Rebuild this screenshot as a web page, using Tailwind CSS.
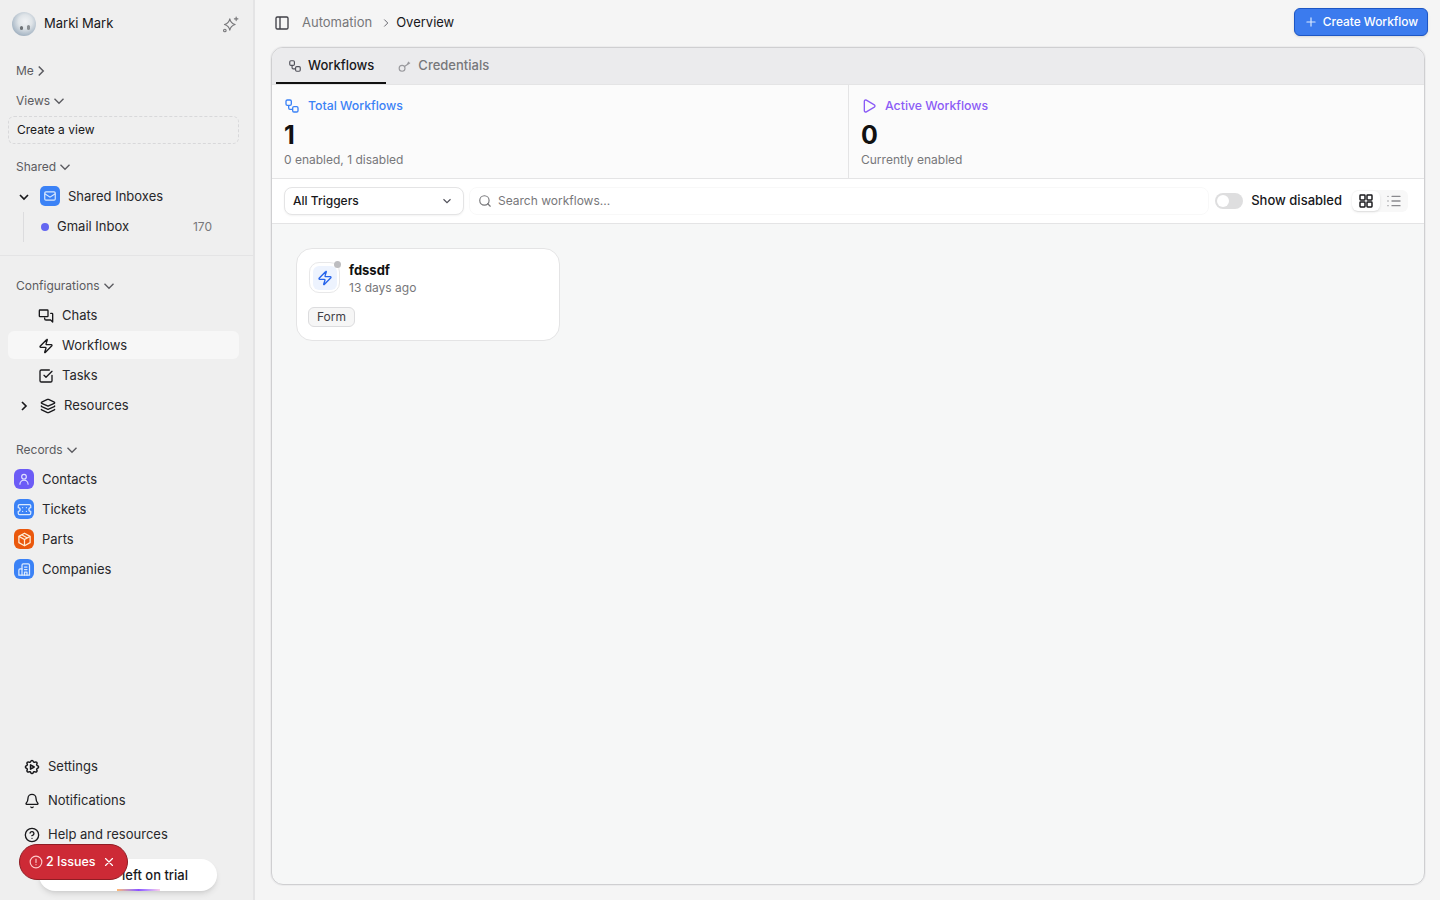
<!DOCTYPE html>
<html lang="en">
  <head>
    <meta charset="UTF-8" />
    <title>Automation - Overview</title>
    <script src="https://cdn.jsdelivr.net/npm/@tailwindcss/browser@4"></script>
  </head>
  <body class="h-screen overflow-hidden bg-[#f5f5f5] font-[Inter,sans-serif] text-[13px] text-[#18181b] antialiased">
    <div class="flex h-[900px]">
      <!-- sidebar -->
      <aside class="relative flex h-full w-[255px] shrink-0 flex-col border-r-2 border-[#e4e4e5] bg-[#efefef] pl-2 pr-[14px]">
        <div class="flex h-[48px] shrink-0 items-center pl-1">
          <div class="relative h-6 w-6 overflow-hidden rounded-full bg-[radial-gradient(circle_at_55%_40%,#f1f3f5_0%,#dfe4e8_35%,#a9b8c6_70%,#76818c_100%)]">
            <span class="absolute left-[8px] top-[14px] h-[4px] w-[3px] rounded-full bg-[#6d7276]"></span>
            <span class="absolute left-[15px] top-[13px] h-[5px] w-[3px] rounded-full bg-[#8a8f93]"></span>
          </div>
          <span class="ml-2 text-[13px]">Marki Mark</span>
          <svg class="ml-auto h-[17px] w-[17px] text-[#77777a]" viewBox="0 0 24 24" fill="none" stroke="currentColor" stroke-width="1.600" stroke-linecap="round" stroke-linejoin="round"><path d="M11 4c.8 4.500 2.500 6.500 7.500 8-5 1.500-6.700 3.500-7.500 8-.8-4.500-2.500-6.500-7.500-8 5-1.500 6.700-3.500 7.500-8z" /><path d="M20 1.500v5M17.500 4h5" /><circle cx="4" cy="20.500" r="1.800" /></svg>
        </div>
        <div class="mt-2 flex h-[30px] items-center pl-2 text-xs text-[#5b5b60]">Me<svg class="-ml-[2px] h-[18px] w-[18px]" viewBox="0 0 24 24" fill="none" stroke="currentColor" stroke-width="2"><path d="m9 6 6 6-6 6" /></svg></div>
        <div class="flex h-[30px] items-center pl-2 text-xs text-[#5b5b60]">Views<svg class="h-[18px] w-[18px]" viewBox="0 0 24 24" fill="none" stroke="currentColor" stroke-width="1.800"><path d="m6 9 6 6 6-6" /></svg></div>
        <div class="flex h-[28px] items-center rounded-md border border-dashed border-[#d8d8da] pl-2 text-xs">Create a view</div>
        <div class="mt-2 flex h-[30px] items-center pl-2 text-xs text-[#5b5b60]">Shared<svg class="h-[18px] w-[18px]" viewBox="0 0 24 24" fill="none" stroke="currentColor" stroke-width="1.800"><path d="m6 9 6 6 6-6" /></svg></div>
        <div class="flex h-[30px] items-center pl-2">
          <svg class="h-4 w-4" viewBox="0 0 24 24" fill="none" stroke="currentColor" stroke-width="2.500"><path d="m6 9 6 6 6-6" /></svg>
          <span class="-mt-0.5 ml-[8px] flex h-5 w-5 items-center justify-center rounded-[5px] bg-[#3b82f6]"><svg class="h-3.5 w-3.5" viewBox="0 0 24 24" fill="none" stroke="#dbeafe" stroke-width="2"><rect x="3" y="5" width="18" height="14" rx="2" /><path d="m3 8 9 6 9-6" /></svg></span>
          <span class="ml-2 text-[#27272a]">Shared Inboxes</span>
        </div>
        <div class="ml-[15px] flex h-[30px] items-center border-l border-[#dcdcde] pl-[17px] pr-[27px]">
          <span class="h-2 w-2 rounded-full bg-[#6366f1]"></span>
          <span class="ml-2 text-[#27272a]">Gmail Inbox</span>
          <span class="ml-auto text-xs text-[#77777a]">170</span>
        </div>
        <div class="-ml-2 -mr-[14px] mt-[13px] border-t border-[#e4e4e5]"></div>
        <div class="mt-[15px] flex h-[30px] items-center pl-2 text-xs text-[#5b5b60]">Configurations<svg class="h-[18px] w-[18px]" viewBox="0 0 24 24" fill="none" stroke="currentColor" stroke-width="1.800"><path d="m6 9 6 6 6-6" /></svg></div>
        <div class="flex h-[28px] items-center pl-[30px] pt-px">
          <svg class="h-4 w-4" viewBox="0 0 24 24" fill="none" stroke="currentColor" stroke-width="2" stroke-linecap="round" stroke-linejoin="round"><path d="M3 3h11a1 1 0 0 1 1 1v8a1 1 0 0 1-1 1H3a1 1 0 0 1-1-1V4a1 1 0 0 1 1-1z" /><path d="M19 8h2a1 1 0 0 1 1 1v12l-3-3h-7a2 2 0 0 1-2-2v-1" /></svg>
          <span class="ml-2 text-[#27272a]">Chats</span>
        </div>
        <div class="mt-0.5 flex h-[28px] items-center rounded-md bg-[#f7f7f7] pl-[30px] pt-px">
          <svg class="h-4 w-4" viewBox="0 0 24 24" fill="none" stroke="currentColor" stroke-width="2" stroke-linecap="round" stroke-linejoin="round"><path d="M4 14a1 1 0 0 1-.78-1.630l9.900-10.200a.5.5 0 0 1 .86.46l-1.920 6.020A1 1 0 0 0 13 10h7a1 1 0 0 1 .78 1.630l-9.900 10.200a.5.5 0 0 1-.86-.46l1.920-6.020A1 1 0 0 0 11 14z" /></svg>
          <span class="ml-2 text-[#27272a]">Workflows</span>
        </div>
        <div class="mt-0.5 flex h-[28px] items-center pl-[30px] pt-px">
          <svg class="h-4 w-4" viewBox="0 0 24 24" fill="none" stroke="currentColor" stroke-width="2" stroke-linecap="round" stroke-linejoin="round"><path d="M21 11v8a2 2 0 0 1-2 2H5a2 2 0 0 1-2-2V5a2 2 0 0 1 2-2h12" /><path d="m9 11 3 3 9-9" /></svg>
          <span class="ml-2 text-[#27272a]">Tasks</span>
        </div>
        <div class="mt-0.5 flex h-[28px] items-center pl-2 pt-px">
          <svg class="h-4 w-4" viewBox="0 0 24 24" fill="none" stroke="currentColor" stroke-width="2.500"><path d="m9 6 6 6-6 6" /></svg>
          <svg class="ml-[8px] h-4 w-4" viewBox="0 0 24 24" fill="none" stroke="currentColor" stroke-width="2" stroke-linecap="round" stroke-linejoin="round"><path d="M12.830 2.180a2 2 0 0 0-1.660 0L2.600 6.080a1 1 0 0 0 0 1.830l8.580 3.910a2 2 0 0 0 1.660 0l8.580-3.900a1 1 0 0 0 0-1.830z" /><path d="M2 12a1 1 0 0 0 .58.91l8.600 3.910a2 2 0 0 0 1.650 0l8.580-3.900A1 1 0 0 0 22 12" /><path d="M2 17a1 1 0 0 0 .58.91l8.600 3.910a2 2 0 0 0 1.650 0l8.580-3.900A1 1 0 0 0 22 17" /></svg>
          <span class="ml-2 text-[#27272a]">Resources</span>
        </div>
        <div class="mt-[16px] flex h-[30px] items-center pl-2 text-xs text-[#5b5b60]">Records<svg class="h-[18px] w-[18px]" viewBox="0 0 24 24" fill="none" stroke="currentColor" stroke-width="1.800"><path d="m6 9 6 6 6-6" /></svg></div>
        <div class="flex h-[30px] items-center pl-1.5">
          <span class="-mt-0.5 flex h-5 w-5 items-center justify-center rounded-md bg-[#6c5cf6]"><svg class="h-3.5 w-3.5" viewBox="0 0 24 24" fill="none" stroke="#e0e0ff" stroke-width="2" stroke-linecap="round"><circle cx="12" cy="8" r="4" /><path d="M5 21a7 7 0 0 1 14 0" /></svg></span>
          <span class="ml-2 text-[#27272a]">Contacts</span>
        </div>
        <div class="flex h-[30px] items-center pl-1.5">
          <span class="-mt-0.5 flex h-5 w-5 items-center justify-center rounded-md bg-[#3b82f6]"><svg class="h-[15px] w-[15px]" viewBox="0 0 24 24" fill="none" stroke="#dbeafe" stroke-width="2" stroke-linecap="round" stroke-linejoin="round"><path d="M2 9a3 3 0 0 1 0 6v3a2 2 0 0 0 2 2h16a2 2 0 0 0 2-2v-3a3 3 0 0 1 0-6V6a2 2 0 0 0-2-2H4a2 2 0 0 0-2 2z" /><path d="M9 9h.01M9 15h.01M15 9h.01M15 15h.01" /></svg></span>
          <span class="ml-2 text-[#27272a]">Tickets</span>
        </div>
        <div class="flex h-[30px] items-center pl-1.5">
          <span class="-mt-0.5 flex h-5 w-5 items-center justify-center rounded-md bg-[#ea580c]"><svg class="h-[15px] w-[15px]" viewBox="0 0 24 24" fill="none" stroke="#ffedd5" stroke-width="2" stroke-linejoin="round"><path d="M12 2 3 7v10l9 5 9-5V7z" /><path d="m3 7 9 5 9-5M12 12v10M7.500 4.500l9 5" /></svg></span>
          <span class="ml-2 text-[#27272a]">Parts</span>
        </div>
        <div class="flex h-[30px] items-center pl-1.5">
          <span class="-mt-0.5 flex h-5 w-5 items-center justify-center rounded-md bg-[#3b82f6]"><svg class="h-[15px] w-[15px]" viewBox="0 0 24 24" fill="none" stroke="#dbeafe" stroke-width="2" stroke-linecap="round" stroke-linejoin="round"><path d="M8 21V5a2 2 0 0 1 2-2h8a2 2 0 0 1 2 2v16z" /><path d="M8 11H5a2 2 0 0 0-2 2v8h5M12 8h4M12 12h4M12 21v-5h4v5" /></svg></span>
          <span class="ml-2 text-[#27272a]">Companies</span>
        </div>
        <div class="mb-[48px] mt-auto flex flex-col pl-4">
          <div class="flex h-[34px] items-center">
            <svg class="h-4 w-4 scale-110" viewBox="0 0 24 24" fill="none" stroke="currentColor" stroke-width="2" stroke-linecap="round" stroke-linejoin="round"><path d="M10.325 4.317c.426-1.756 2.924-1.756 3.350 0a1.724 1.724 0 0 0 2.573 1.066c1.543-.94 3.310.826 2.370 2.370a1.724 1.724 0 0 0 1.065 2.572c1.756.426 1.756 2.924 0 3.350a1.724 1.724 0 0 0-1.066 2.573c.94 1.543-.826 3.310-2.370 2.370a1.724 1.724 0 0 0-2.572 1.065c-.426 1.756-2.924 1.756-3.350 0a1.724 1.724 0 0 0-2.573-1.066c-1.543.94-3.310-.826-2.370-2.370a1.724 1.724 0 0 0-1.065-2.572c-1.756-.426-1.756-2.924 0-3.350a1.724 1.724 0 0 0 1.066-2.573c-.94-1.543.826-3.310 2.370-2.370 1 .608 2.296.07 2.572-1.065z" /><path d="M10 9v6l5-3z" /></svg>
            <span class="ml-2 text-[#27272a]">Settings</span>
          </div>
          <div class="flex h-[34px] items-center">
            <svg class="h-4 w-4" viewBox="0 0 24 24" fill="none" stroke="currentColor" stroke-width="2" stroke-linecap="round" stroke-linejoin="round"><path d="M10.268 21a2 2 0 0 0 3.464 0" /><path d="M3.262 15.326A1 1 0 0 0 4 17h16a1 1 0 0 0 .74-1.673C19.410 13.956 18 12.499 18 8A6 6 0 0 0 6 8c0 4.499-1.411 5.956-2.738 7.326" /></svg>
            <span class="ml-2 text-[#27272a]">Notifications</span>
          </div>
          <div class="flex h-[34px] items-center">
            <svg class="h-4 w-4" viewBox="0 0 24 24" fill="none" stroke="currentColor" stroke-width="2" stroke-linecap="round" stroke-linejoin="round"><circle cx="12" cy="12" r="10" /><path d="M9.090 9a3 3 0 0 1 5.830 1c0 2-3 3-3 3" /><path d="M12 17h.01" /></svg>
            <span class="ml-2 text-[#27272a]">Help and resources</span>
          </div>
        </div>
        <!-- trial pill with the issues badge over it -->
        <div class="absolute left-[39px] top-[859px] flex h-[32px] w-[178px] items-center justify-end overflow-hidden rounded-full bg-white pr-[29px] pt-[2px] text-[13px] font-medium shadow-md">
          left on trial
          <span class="absolute bottom-0 left-[78px] h-[2px] w-[43px] bg-gradient-to-r from-orange-300 via-violet-500 to-pink-200"></span>
        </div>
        <div class="absolute left-[19px] top-[844px] flex h-[36px] w-[109px] items-center rounded-full border border-[#8f1d24] bg-[#cd2a36] pl-[9px] text-[12.500px] font-medium text-white">
          <svg class="h-3.5 w-3.5" viewBox="0 0 24 24" fill="none" stroke="#fecaca" stroke-width="2" stroke-linecap="round"><circle cx="12" cy="12" r="10" /><path d="M12 7v6M12 16.500h.01" /></svg>
          <span class="ml-[3px]">2 Issues</span>
          <svg class="ml-[6px] h-3.5 w-3.5" viewBox="0 0 24 24" fill="none" stroke="currentColor" stroke-width="2" stroke-linecap="round"><path d="M18 6 6 18M6 6l12 12" /></svg>
        </div>
      </aside>

      <!-- main column -->
      <main class="flex h-full min-w-0 flex-1 flex-col">
        <header class="mb-px flex h-[46px] shrink-0 items-center pl-[19px] pr-3">
          <svg class="h-4 w-4 text-[#3f3f46]" viewBox="0 0 24 24" fill="none" stroke="currentColor" stroke-width="2"><rect x="3" y="3" width="18" height="18" rx="2" /><path d="M9 3v18" /></svg>
          <span class="ml-[12px] text-[#77777a]">Automation</span>
          <svg class="ml-[7px] h-3.5 w-3.5 text-[#52525b]" viewBox="0 0 24 24" fill="none" stroke="currentColor" stroke-width="1.500"><path d="m9 6 6 6-6 6" /></svg>
          <span class="ml-[3px]">Overview</span>
          <button class="-mt-[2px] ml-auto flex h-[28px] w-[134px] items-center justify-center rounded-md border border-[#1d56c4] bg-[#3b7bee] text-[11.900px] font-medium text-white shadow-sm">
            <svg class="mr-[5px] h-3.5 w-3.5" viewBox="0 0 24 24" fill="none" stroke="#dbeafe" stroke-width="2" stroke-linecap="round"><path d="M5 12h14M12 5v14" /></svg>
            Create Workflow
          </button>
        </header>
        <section class="mb-[15px] ml-[16px] mr-[15px] flex min-h-0 flex-1 flex-col overflow-hidden rounded-xl border border-[#cfcfd1] bg-[#f6f7f7] shadow-[0_0_0_1px_#ececed]">
          <div class="flex h-[36px] shrink-0 bg-[#ebebed] pl-[4px]">
            <div class="flex h-full items-center border-b-2 border-[#111] px-3 pt-[2px] font-medium">
              <svg class="h-3.5 w-3.5 text-[#52525b]" viewBox="0 0 24 24" fill="none" stroke="currentColor" stroke-width="2"><rect x="3" y="3" width="8" height="8" rx="2" /><path d="M7 11v4a2 2 0 0 0 2 2h4" /><rect x="13" y="13" width="8" height="8" rx="2" /></svg>
              <span class="ml-[6px]">Workflows</span>
            </div>
            <div class="flex h-full items-center pl-3 font-medium text-[#77777a]">
              <svg class="h-3.5 w-3.5 text-[#9a9a9e]" viewBox="0 0 24 24" fill="none" stroke="currentColor" stroke-width="2" stroke-linecap="round"><circle cx="7" cy="16" r="5" /><path d="m11 13 9-6M16 9.500l2-4" /></svg>
              <span class="ml-[6px]">Credentials</span>
            </div>
          </div>
          <div class="grid h-[95px] shrink-0 grid-cols-[577px_1fr] border-y border-[#e4e4e5] bg-[#fbfbfb]">
            <div class="border-r border-[#e4e4e5] pl-3 pt-[12px]">
              <div class="flex items-center text-[12.300px] font-medium text-[#3b82f6]">
                <svg class="h-4 w-4" viewBox="0 0 24 24" fill="none" stroke="currentColor" stroke-width="2"><rect x="3" y="3" width="8" height="8" rx="2" /><path d="M7 11v4a2 2 0 0 0 2 2h4" /><rect x="13" y="13" width="8" height="8" rx="2" /></svg>
                <span class="ml-2">Total Workflows</span>
              </div>
              <div class="mt-[6px] text-[25px] font-bold leading-[28px] text-[#111]">1</div>
              <div class="mt-[3px] text-xs text-[#77777a]">0 enabled, 1 disabled</div>
            </div>
            <div class="pl-3 pt-[12px]">
              <div class="flex items-center text-[12.300px] font-medium text-[#8b5cf6]">
                <svg class="h-4 w-4" viewBox="0 0 24 24" fill="none" stroke="currentColor" stroke-width="2" stroke-linejoin="round"><path d="M5 5a2 2 0 0 1 3-1.700l12 7a2 2 0 0 1 0 3.400l-12 7A2 2 0 0 1 5 19z" /></svg>
                <span class="ml-2">Active Workflows</span>
              </div>
              <div class="mt-[6px] text-[25px] font-bold leading-[28px] text-[#111]">0</div>
              <div class="mt-[3px] text-xs text-[#77777a]">Currently enabled</div>
            </div>
          </div>
          <div class="flex h-[45px] shrink-0 items-center border-b border-[#e4e4e5] bg-white pl-3 pr-[16px]">
            <div class="flex h-[28px] w-[180px] items-center rounded-lg border border-[#e4e4e5] bg-white pl-2 pr-[9px] text-xs font-medium shadow-xs">
              All Triggers
              <svg class="ml-auto h-3.5 w-3.5 text-[#52525b]" viewBox="0 0 24 24" fill="none" stroke="currentColor" stroke-width="2"><path d="m6 9 6 6 6-6" /></svg>
            </div>
            <div class="ml-[5px] flex h-[28px] flex-1 items-center rounded-lg border border-[#f8f8f8] pl-2 text-xs text-[#77777a]">
              <svg class="h-3.5 w-3.5" viewBox="0 0 24 24" fill="none" stroke="currentColor" stroke-width="2" stroke-linecap="round"><circle cx="11" cy="11" r="8" /><path d="m21 21-4.300-4.300" /></svg>
              <span class="ml-[6px]">Search workflows...</span>
            </div>
            <span class="ml-[6px] flex h-[16px] w-[28px] items-center rounded-full bg-[#dededf] pl-[2px]"><span class="h-3 w-3 rounded-full bg-white"></span></span>
            <span class="ml-2 font-medium">Show disabled</span>
            <div class="ml-[10px] flex h-[22px] items-center rounded-md bg-[#f8f8f8]">
              <span class="flex h-[20px] w-[28px] items-center justify-center rounded-md bg-white shadow-sm"><svg class="h-4 w-4" viewBox="0 0 24 24" fill="none" stroke="#18181b" stroke-width="2.200"><rect x="3" y="3" width="7.500" height="7.500" rx="1" /><rect x="13.500" y="3" width="7.500" height="7.500" rx="1" /><rect x="3" y="13.500" width="7.500" height="7.500" rx="1" /><rect x="13.500" y="13.500" width="7.500" height="7.500" rx="1" /></svg></span>
              <span class="flex h-[20px] w-[28px] items-center justify-center"><svg class="h-4 w-4" viewBox="0 0 24 24" fill="none" stroke="#8a8a8e" stroke-width="2" stroke-linecap="round"><path d="M9 5h12M9 12h12M9 19h12M3 5h.01M3 12h.01M3 19h.01" /></svg></span>
            </div>
          </div>
          <div class="min-h-0 flex-1 px-6 pt-[24px]">
            <div class="h-[93px] w-[264px] rounded-2xl border border-[#e4e4e5] bg-white pl-3 pt-[13px]">
              <div class="flex">
                <div class="relative flex h-[31px] w-[31px] items-center justify-center rounded-[10px] border border-[#e8e8e9] bg-white">
                  <span class="flex h-6 w-6 items-center justify-center rounded-md bg-[#edf3fe]"><svg class="h-4 w-4 text-[#2563eb]" viewBox="0 0 24 24" fill="none" stroke="currentColor" stroke-width="2" stroke-linecap="round" stroke-linejoin="round"><path d="M4 14a1 1 0 0 1-.78-1.630l9.900-10.200a.5.5 0 0 1 .86.46l-1.920 6.020A1 1 0 0 0 13 10h7a1 1 0 0 1 .78 1.630l-9.900 10.200a.5.5 0 0 1-.86-.46l1.920-6.020A1 1 0 0 0 11 14z" /></svg></span>
                  <span class="absolute -right-[2px] -top-[2px] h-[7px] w-[7px] rounded-full bg-[#bdbdc0]"></span>
                </div>
                <div class="ml-[9px]">
                  <div class="text-[13px] font-bold leading-[17px] text-[#111]">fdssdf</div>
                  <div class="text-xs leading-[17px] text-[#77777a]">13 days ago</div>
                </div>
              </div>
              <span class="-ml-px mt-[11px] inline-flex h-[20px] items-center rounded-md border border-[#dcdcde] bg-[#f6f6f6] px-2 text-xs text-[#3f3f46]">Form</span>
            </div>
          </div>
        </section>
      </main>
    </div>
  </body>
</html>
